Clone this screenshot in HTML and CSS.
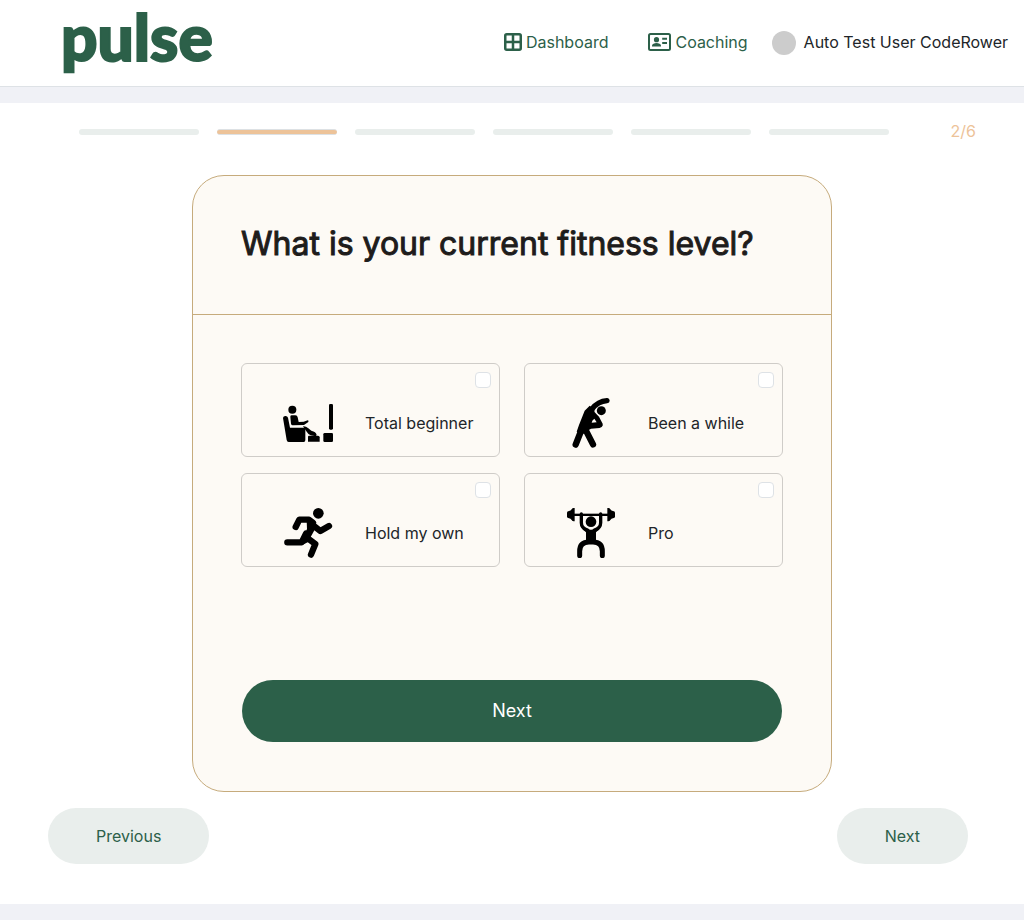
FILE: index.html
```html
<!DOCTYPE html>
<html lang="en">
<head>
<meta charset="utf-8">
<meta name="viewport" content="width=device-width, initial-scale=1">
<title>Pulse</title>
<link rel="stylesheet" href="styles.css">
</head>
<body>
<header class="topbar">
  <a class="logo" href="#">pulse</a>
  <nav class="nav">
    <a class="nav-link" href="#">
      <svg class="icon-grid" viewBox="0 0 18 18" aria-hidden="true"><rect x="1.25" y="1.25" width="15.5" height="15.5" rx="1.5"/><path d="M9 1v16M1 9h16"/></svg>
      <span>Dashboard</span>
    </a>
    <a class="nav-link" href="#">
      <svg class="icon-card" viewBox="0 0 23 18" aria-hidden="true"><rect class="line" x="1" y="1" width="21" height="16" rx="1.5"/><circle cx="8.5" cy="6.7" r="2.6"/><path d="M4 13.5v-1c0-1.500 2.500-2.500 4.500-2.500s4.500 1 4.500 2.500v1z"/><path class="line" d="M14.200 5.800h4.800M14.200 10h4.800"/></svg>
      <span>Coaching</span>
    </a>
    <a class="user" href="#"><span class="avatar"></span><span>Auto Test User CodeRower</span></a>
  </nav>
</header>
<main class="survey">
  <div class="progress">
    <ol class="steps">
      <li class="step"></li><li class="step step-current"></li><li class="step"></li><li class="step"></li><li class="step"></li><li class="step"></li>
    </ol>
    <span class="count">2/6</span>
  </div>
  <form class="card">
    <h1 class="question">What is your current fitness level?</h1>
    <div class="answers">
      <div class="options">
        <label class="option">
          <svg class="figure" viewBox="39 24 150 150" aria-hidden="true">
            <circle cx="67" cy="59" r="12"/>
            <path d="M39 84q0-5 6-6 7-1 9 5l6 30h42q4 0 4 5v32q0 6-5 6H56q-5 0-6-6z"/>
            <path d="M61 80q0-4 4-4h11q6 0 7 6l3 14 15-1 12-4q4 1 2 5l-13 9-34 1q-4 0-5-5z"/>
            <path d="M99 109q8-1 16 6l9 7q14 3 16 13l-3 4-15-3q-8-3-13-12z"/>
            <path d="M117 137h27q5 0 5 5v13h-35v-14q0-4 3-4z"/>
            <rect x="177" y="42" width="12" height="77" rx="4"/><rect x="160" y="129" width="29" height="27" rx="4"/>
          </svg>
          <span>Total beginner</span>
          <input class="tick" type="checkbox">
        </label>
        <label class="option">
          <svg class="figure" viewBox="33 24 150 150" aria-hidden="true">
            <circle cx="139" cy="62" r="13.500"/>
            <path d="M62 164l22-56M91 118l23 45" class="limb"/>
            <path class="arm" d="M156 32q-27 2-45 25l-16 22"/>
            <path d="M104 47l-15 15-17 43-7 20 21 6 9-7 13-8 17-1q10 0 15-4 5-4 3-10l-11-21-8-8q-8-6-6-14zM118 86l7 11-15 1q1-7 8-12z" fill-rule="evenodd"/>
          </svg>
          <span>Been a while</span>
          <input class="tick" type="checkbox">
        </label>
        <label class="option">
          <svg class="figure" viewBox="39 24 150 150" aria-hidden="true">
            <circle cx="145" cy="40" r="16"/>
            <path class="limb" d="M77 81l11-22h29l12 9M129 76l22 17 26-15M52 127h43l13-26M111 113l25 19-13 32"/>
            <path d="M110 61q8-6 17 2l12 17-17 31 4 9-23 12-11-4 19-41z"/>
          </svg>
          <span>Hold my own</span>
          <input class="tick" type="checkbox">
        </label>
        <label class="option">
          <svg class="figure" viewBox="33 24 150 150" aria-hidden="true">
            <rect x="50" y="41" width="116" height="7"/>
            <path d="M36 38q0-4 6-5 5 0 8-5 2-4 6-4h3v40h-3q-4 0-6-4-3-5-8-5-6-1-6-5zM180 38q0-4-6-5-5 0-8-5-2-4-6-4h-3v40h3q4 0 6-4 3-5 8-5 6-1 6-5z"/>
            <circle cx="108" cy="65" r="16"/>
            <path class="lift" d="M79 42v26q0 17 19 22M137 42v26q0 17-19 22"/>
            <path d="M86 80q8 9 22 9t22-9l4 7-11 10v29H93V97L82 87z"/>
            <path class="legs" d="M74 167v-13q0-28 28-28h12q28 0 28 28v13"/>
          </svg>
          <span>Pro</span>
          <input class="tick" type="checkbox">
        </label>
      </div>
      <button class="submit" type="button">Next</button>
    </div>
  </form>
  <div class="pager">
    <button class="pager-button" type="button">Previous</button>
    <button class="pager-button" type="button">Next</button>
  </div>
</main>
</body>
</html>
```
FILE: styles.css
```css
* { box-sizing: border-box; }
body {
  margin: 0;
  background: #f0f1f6;
  color: #212529;
  font: 16px/24px Inter, sans-serif;
}
button { font: inherit; border: 0; cursor: pointer; }
a { color: inherit; text-decoration: none; }
.topbar {
  display: flex;
  justify-content: space-between;
  align-items: center;
  height: 87px;
  padding: 0 16px 0 61px;
  background: #fff;
  border-bottom: 1px solid #dee2e6;
}
.logo {
  padding-bottom: 12px;
  color: #2c6049;
  font: 900 64px/72px Lato, sans-serif;
  -webkit-text-stroke: 2px #2c6049;
}
.nav { display: flex; align-items: center; padding-bottom: 2px; }
.nav-link {
  display: flex;
  align-items: center;
  gap: 4px;
  margin-right: 40px;
  color: #2c6049;
}
.nav-link + .nav-link { margin-right: 24px; }
.icon-grid { width: 18px; height: 18px; fill: none; stroke: #2c6049; stroke-width: 2.500; }
.icon-card { width: 23px; height: 18px; fill: #2c6049; }
.icon-card .line { fill: none; stroke: #2c6049; stroke-width: 2; }
.user { display: flex; align-items: center; gap: 8px; }
.avatar { width: 24px; height: 24px; margin-top: 2px; border-radius: 50%; background: #ccc; }
.survey {
  margin: 16px 0;
  padding: 16px 48px 40px;
  background: #fff;
}
.progress {
  display: flex;
  align-items: center;
  justify-content: space-between;
  height: 24px;
  padding-left: 31px;
}
.steps {
  display: flex;
  flex: 1;
  gap: 18px;
  margin: 2px 62px 0 0;
  padding: 0;
  list-style: none;
}
.step { flex: 1; height: 6px; border-radius: 3px; background: #e9eeec; }
.step-current { background: #edc399; border: 1px solid #dde1e4; border-width: 1px 0; }
.count { color: #edc399; }
.card {
  max-width: 640px;
  margin: 32px auto 16px;
  border: 1px solid #c6ab7c;
  border-radius: 32px;
  background: #fdfaf5;
}
.question {
  margin: 0;
  padding: 48px 48px 50px;
  border-bottom: 1px solid #c6ab7c;
  color: #1e1c1b;
  font-size: 32px;
  font-weight: 400;
  line-height: 40px;
  -webkit-text-stroke: 1px #1e1c1b;
}
.answers { padding: 48px; }
.options {
  display: grid;
  grid-template-columns: 1fr 1fr;
  gap: 16px 24px;
  margin-bottom: 112px;
}
.option {
  position: relative;
  display: flex;
  align-items: center;
  gap: 32px;
  height: 94px;
  padding: 26px 8px 0 41px;
  border: 1px solid #cfccc8;
  border-radius: 6px;
}
.figure { width: 50px; height: 50px; }
.limb, .arm, .lift, .legs { fill: none; stroke: #000; stroke-linecap: round; stroke-linejoin: round; }
.limb { stroke-width: 19px; }
.arm { stroke-width: 16px; }
.lift { stroke-width: 10px; }
.legs { stroke-width: 15px; }
.tick {
  position: absolute;
  top: 8px;
  right: 8px;
  width: 16px;
  height: 16px;
  margin: 0;
  appearance: none;
  border: 1px solid #dee2e6;
  border-radius: 4px;
  background: #fff;
}
.tick:checked { background: #2c6049; }
.submit {
  display: block;
  width: 100%;
  height: 64px;
  border: 1px solid transparent;
  border-radius: 32px;
  background: #2c6049;
  background-clip: padding-box;
  color: #fff;
  font-size: 18px;
}
.pager { display: flex; justify-content: space-between; padding-right: 8px; }
.pager-button {
  height: 56px;
  padding: 0 48px;
  border-radius: 28px;
  background: #e9eeec;
  color: #2c6049;
}
```
